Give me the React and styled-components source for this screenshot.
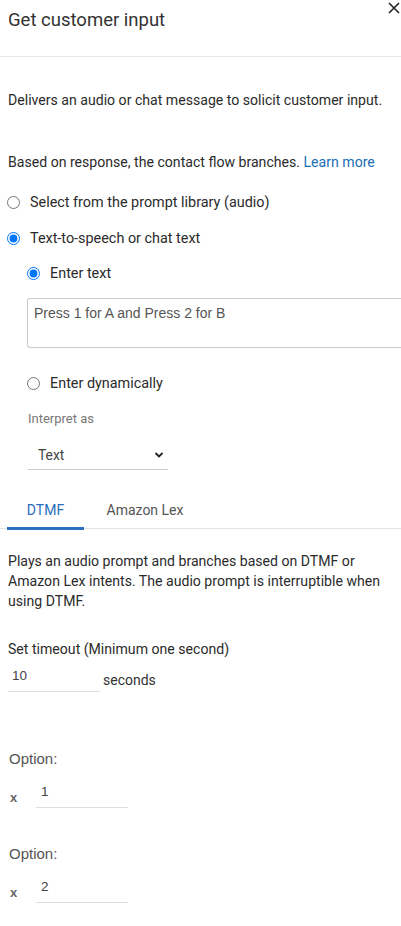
import React from "react";
import styled, { createGlobalStyle } from "styled-components";

const Global = createGlobalStyle`
  html, body { margin: 0; padding: 0; background: #fff; }
  body { font-family: Roboto, "Noto Sans", sans-serif; color: #222; }
`;

const Panel = styled.div`
  width: 401px;
  overflow: hidden;
`;

const Header = styled.header`
  position: relative;
  height: 57px;
  border-bottom: 1px solid #e8e8e8;
  padding: 8px 8px 0;
  box-sizing: border-box;
`;

const Title = styled.h1`
  margin: 0;
  font-size: 18.5px;
  font-weight: 400;
  line-height: 24px;
  color: #333;
`;

const Close = styled.button`
  position: absolute;
  top: 1px;
  right: 0;
  width: 14px;
  height: 14px;
  padding: 0;
  border: 0;
  background: none;
  display: flex;
`;

const Body = styled.div`
  padding: 0 0 20px;
`;

const Para = styled.p`
  margin: ${(p) => p.$mt || 0}px 0 0;
  padding: 0 8px;
  font-size: 14.1px;
  line-height: 20px;
  color: #2b2b2b;
`;

const Link = styled.a`
  color: #1a6fb5;
  text-decoration: none;
`;

const RadioRow = styled.label`
  display: flex;
  align-items: center;
  gap: 10px;
  height: 20px;
  margin: ${(p) => p.$mt || 0}px 0 0 ${(p) => p.$indent || 7}px;
  font-size: 14.4px;
  color: #2b2b2b;
`;

const Radio = styled.input.attrs({ type: "radio" })`
  width: 13px;
  height: 13px;
  margin: 0;
  accent-color: #0075ff;
`;

const TextBox = styled.div`
  margin: 15px 0 0 27px;
  height: 50px;
  border: 1px solid #ccc;
  border-right: 0;
  border-radius: 3px 0 0 3px;
  box-sizing: border-box;
  padding: 6px 6px;
  font-family: "Liberation Sans", Arial, sans-serif;
  font-size: 14px;
  color: #555;
`;

const SubLabel = styled.div`
  margin: 16px 0 0 28px;
  font-size: 13px;
  line-height: 20px;
  color: #777;
`;

const Select = styled.div`
  margin: 17px 0 0 28px;
  width: 140px;
  height: 24px;
  border-bottom: 1px solid #ccc;
  display: flex;
  align-items: flex-start;
  justify-content: space-between;
  padding: 0 4px 0 10px;
  box-sizing: border-box;
  font-size: 13.8px;
  line-height: 18px;
  color: #444;
`;

const Tabs = styled.div`
  margin-top: 30px;
  display: flex;
  border-bottom: 1px solid #e4e4e4;
  padding-left: 7px;
`;

const Tab = styled.div`
  font-size: 14px;
  line-height: 20px;
  padding: 0 0 7px;
  width: ${(p) => p.$w}px;
  text-align: center;
  color: ${(p) => (p.$active ? "#2a6ebd" : "#555")};
  border-bottom: 3px solid ${(p) => (p.$active ? "#2a6ebd" : "transparent")};
  margin-bottom: -2px;
  margin-right: ${(p) => p.$mr || 0}px;
`;

const FieldRow = styled.div`
  display: flex;
  align-items: flex-start;
  margin: ${(p) => p.$mt || 0}px 0 0 ${(p) => p.$ml || 8}px;
`;

const LineInput = styled.div`
  width: ${(p) => p.$w}px;
  height: 24px;
  border-bottom: 1px solid #ddd;
  box-sizing: border-box;
  padding-left: ${(p) => p.$pl || 4}px;
  font-family: ${(p) => (p.$arial ? `"Liberation Sans", Arial, sans-serif` : "inherit")};
  font-size: 13.5px;
  line-height: 16px;
  color: #444;
`;

const Suffix = styled.span`
  margin: 4px 0 0 3px;
  font-size: 14px;
  line-height: 16px;
  color: #333;
`;

const OptionLabel = styled.div`
  margin: ${(p) => p.$mt}px 0 0 9px;
  font-family: "Liberation Sans", Arial, sans-serif;
  font-size: 15px;
  line-height: 16px;
  color: #555;
`;

const XMark = styled.span`
  width: 28px;
  padding: 7px 0 0 2px;
  box-sizing: border-box;
  font-family: "Liberation Sans", Arial, sans-serif;
  font-size: 13px;
  font-weight: 700;
  line-height: 14px;
  color: #666;
`;

function OptionBlock({ mt, value }) {
  return (
    <>
      <OptionLabel $mt={mt}>Option:</OptionLabel>
      <FieldRow $mt={17} $ml={8}>
        <XMark>x</XMark>
        <LineInput $w={92} $pl={5} $arial>
          {value}
        </LineInput>
      </FieldRow>
    </>
  );
}

export default function App() {
  return (
    <Panel>
      <Global />
      <Header>
        <Title>Get customer input</Title>
        <Close aria-label="Close">
          <svg width="14" height="14" viewBox="0 0 14 14">
            <path d="M2 2 L12 12 M12 2 L2 12" stroke="#222" strokeWidth="1.6" />
          </svg>
        </Close>
      </Header>
      <Body>
        <Para $mt={33}>Delivers an audio or chat message to solicit customer input.</Para>
        <Para $mt={42}>
          Based on response, the contact flow branches. <Link href="#">Learn more</Link>
        </Para>
        <RadioRow $mt={20}>
          <Radio name="src" />
          Select from the prompt library (audio)
        </RadioRow>
        <RadioRow $mt={16}>
          <Radio name="src" defaultChecked />
          Text-to-speech or chat text
        </RadioRow>
        <RadioRow $mt={15} $indent={27}>
          <Radio name="mode" defaultChecked />
          Enter text
        </RadioRow>
        <TextBox>Press 1 for A and Press 2 for B</TextBox>
        <RadioRow $mt={25} $indent={27}>
          <Radio name="mode" />
          Enter dynamically
        </RadioRow>
        <SubLabel>Interpret as</SubLabel>
        <Select>
          Text
          <svg width="10" height="18" viewBox="0 0 10 18">
            <path d="M1.5 7 L5 10.5 L8.5 7" stroke="#222" strokeWidth="1.8" fill="none" />
          </svg>
        </Select>
        <Tabs>
          <Tab $active $w={77} $mr={16}>DTMF</Tab>
          <Tab $w={90}>Amazon Lex</Tab>
        </Tabs>
        <Para $mt={22}>
          Plays an audio prompt and branches based on DTMF or Amazon Lex intents. The audio prompt is interruptible when using DTMF.
        </Para>
        <Para $mt={28}>Set timeout (Minimum one second)</Para>
        <FieldRow $mt={9}>
          <LineInput $w={92} $arial>10</LineInput>
          <Suffix>seconds</Suffix>
        </FieldRow>
        <OptionBlock mt={59} value="1" />
        <OptionBlock mt={38} value="2" />
      </Body>
    </Panel>
  );
}
